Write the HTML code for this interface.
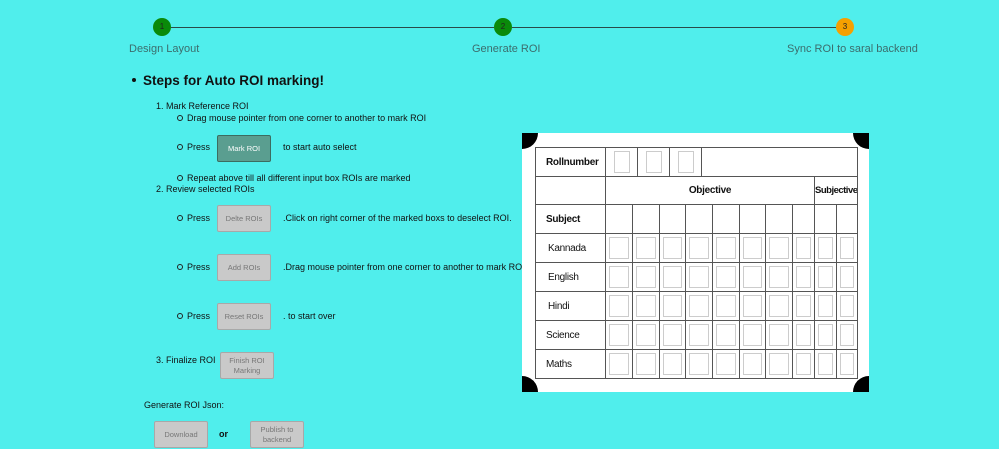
<!DOCTYPE html>
<html><head><meta charset="utf-8"><style>
body{margin:0;width:999px;height:449px;background:#50eeec;font-family:"Liberation Sans",sans-serif;position:relative;overflow:hidden;color:#111}
.a{position:absolute;white-space:nowrap}
.c{position:absolute;width:18px;height:18px;border-radius:50%;font-size:8px;text-align:center;line-height:18px;color:#222}
.ln{position:absolute;height:1px;background:#2a4a4a;top:27px}
.lbl{position:absolute;font-size:11px;color:#3c6d6d;top:43px}
.t{font-size:9px}
.btn{position:absolute;width:52px;height:25px;background:#c9c9c9;border:1px solid #a8a8a8;border-radius:2px;font-size:7.5px;color:#777;text-align:center;display:flex;align-items:center;justify-content:center;line-height:10px}
.o{position:absolute;width:4px;height:4px;border:1px solid #222;border-radius:50%}
table{border-collapse:collapse;position:absolute;left:535px;top:147px;width:322px;table-layout:fixed}
td{border:1px solid #555;padding:0;font-size:10px;letter-spacing:-0.3px;font-family:"Liberation Sans",sans-serif;overflow:hidden;white-space:nowrap}
.bx{border:1px solid #ccc;margin:3px 3px;height:20px}
.q{position:absolute;width:16px;height:16px;background:#000}
</style></head><body>
<div class="ln" style="left:171px;width:323px"></div>
<div class="ln" style="left:512px;width:324px"></div>
<div class="c" style="left:153px;top:18px;background:#0a8a0a">1</div>
<div class="c" style="left:494px;top:18px;background:#0a8a0a">2</div>
<div class="c" style="left:836px;top:18px;background:#f5a000">3</div>
<div class="lbl" style="left:129px">Design Layout</div>
<div class="lbl" style="left:472px">Generate ROI</div>
<div class="lbl" style="left:787px">Sync ROI to saral backend</div>

<div class="a" style="left:132px;top:78px;width:4px;height:4px;background:#111;border-radius:50%"></div>
<div class="a" style="left:143px;top:73px;font-size:13.5px;font-weight:bold">Steps for Auto ROI marking!</div>
<div class="a t" style="left:156px;top:101px">1. Mark Reference ROI</div>
<div class="o" style="left:177px;top:115px"></div><div class="a t" style="left:187px;top:113px">Drag mouse pointer from one corner to another to mark ROI</div>
<div class="o" style="left:177px;top:144px"></div><div class="a t" style="left:187px;top:142px">Press</div>
<div class="btn" style="left:217px;top:135px;background:#5a9e90;border-color:#3c6c60;color:#fff">Mark ROI</div>
<div class="a t" style="left:283px;top:142px">to start auto select</div>
<div class="o" style="left:177px;top:175px"></div><div class="a t" style="left:187px;top:173px">Repeat above till all different input box ROIs are marked</div>
<div class="a t" style="left:156px;top:184px">2. Review selected ROIs</div>
<div class="o" style="left:177px;top:215px"></div><div class="a t" style="left:187px;top:213px">Press</div>
<div class="btn" style="left:217px;top:205px">Delte ROIs</div>
<div class="a t" style="left:283px;top:213px">.Click on right corner of the marked boxs to deselect ROI.</div>
<div class="o" style="left:177px;top:264px"></div><div class="a t" style="left:187px;top:262px">Press</div>
<div class="btn" style="left:217px;top:254px">Add ROIs</div>
<div class="a t" style="left:283px;top:262px">.Drag mouse pointer from one corner to another to mark ROI</div>
<div class="o" style="left:177px;top:313px"></div><div class="a t" style="left:187px;top:311px">Press</div>
<div class="btn" style="left:217px;top:303px">Reset ROIs</div>
<div class="a t" style="left:283px;top:311px">. to start over</div>
<div class="a t" style="left:156px;top:355px">3. Finalize ROI</div>
<div class="btn" style="left:220px;top:352px">Finish ROI<br>Marking</div>
<div class="a t" style="left:144px;top:400px">Generate ROI Json:</div>
<div class="btn" style="left:154px;top:421px">Download</div>
<div class="a" style="left:219px;top:429px;font-size:9px;font-weight:bold">or</div>
<div class="btn" style="left:250px;top:421px">Publish to<br>backend</div>

<div class="a" style="left:522px;top:133px;width:347px;height:259px;background:#fff"></div>
<div class="q" style="left:522px;top:133px;border-radius:0 0 16px 0"></div>
<div class="q" style="left:853px;top:133px;border-radius:0 0 0 16px"></div>
<div class="q" style="left:522px;top:376px;border-radius:0 16px 0 0"></div>
<div class="q" style="left:853px;top:376px;border-radius:16px 0 0 0"></div>
<table>
<colgroup><col style="width:70px"><col style="width:27px"><col style="width:27px"><col style="width:26px"><col style="width:27px"><col style="width:27px"><col style="width:26px"><col style="width:27px"><col style="width:22px"><col style="width:22px"><col style="width:21px"></colgroup>
<tr style="height:29px"><td style="font-weight:bold;padding-left:10px">Rollnumber</td><td colspan="10"><div style="display:flex;height:28px"><div style="width:31px;border-right:1px solid #555"><div class="bx" style="width:14px;margin:3px 8px"></div></div><div style="width:31px;border-right:1px solid #555"><div class="bx" style="width:14px;margin:3px 8px"></div></div><div style="width:31px;border-right:1px solid #555"><div class="bx" style="width:14px;margin:3px 8px"></div></div></div></td></tr>
<tr style="height:28px"><td></td><td colspan="8" style="text-align:center;font-weight:bold">Objective</td><td colspan="2" style="font-weight:bold;border-left:1px solid #999;font-size:9.5px;letter-spacing:-0.5px">Subjective</td></tr>
<tr style="height:29px"><td style="font-weight:bold;padding-left:10px">Subject</td><td></td><td></td><td></td><td></td><td></td><td></td><td></td><td></td><td></td><td></td></tr>
<tr style="height:29px"><td style="padding-left:12px">Kannada</td><td><div class="bx"></div></td><td><div class="bx"></div></td><td><div class="bx"></div></td><td><div class="bx"></div></td><td><div class="bx"></div></td><td><div class="bx"></div></td><td><div class="bx"></div></td><td><div class="bx"></div></td><td><div class="bx"></div></td><td><div class="bx"></div></td></tr>
<tr style="height:29px"><td style="padding-left:12px">English</td><td><div class="bx"></div></td><td><div class="bx"></div></td><td><div class="bx"></div></td><td><div class="bx"></div></td><td><div class="bx"></div></td><td><div class="bx"></div></td><td><div class="bx"></div></td><td><div class="bx"></div></td><td><div class="bx"></div></td><td><div class="bx"></div></td></tr>
<tr style="height:29px"><td style="padding-left:12px">Hindi</td><td><div class="bx"></div></td><td><div class="bx"></div></td><td><div class="bx"></div></td><td><div class="bx"></div></td><td><div class="bx"></div></td><td><div class="bx"></div></td><td><div class="bx"></div></td><td><div class="bx"></div></td><td><div class="bx"></div></td><td><div class="bx"></div></td></tr>
<tr style="height:29px"><td style="padding-left:10px">Science</td><td><div class="bx"></div></td><td><div class="bx"></div></td><td><div class="bx"></div></td><td><div class="bx"></div></td><td><div class="bx"></div></td><td><div class="bx"></div></td><td><div class="bx"></div></td><td><div class="bx"></div></td><td><div class="bx"></div></td><td><div class="bx"></div></td></tr>
<tr style="height:29px"><td style="padding-left:10px">Maths</td><td><div class="bx"></div></td><td><div class="bx"></div></td><td><div class="bx"></div></td><td><div class="bx"></div></td><td><div class="bx"></div></td><td><div class="bx"></div></td><td><div class="bx"></div></td><td><div class="bx"></div></td><td><div class="bx"></div></td><td><div class="bx"></div></td></tr>
</table>
</body></html>
